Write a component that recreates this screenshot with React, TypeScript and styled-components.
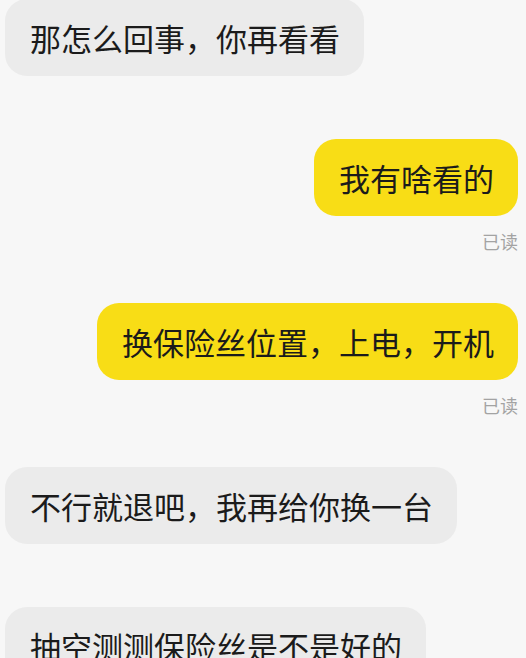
import React from 'react';
import styled, { createGlobalStyle } from 'styled-components';

const GlobalStyle = createGlobalStyle`
  html, body {
    margin: 0;
    padding: 0;
    background: #f7f7f7;
  }
  body {
    font-family: "Noto Sans CJK SC", "Noto Sans", sans-serif;
  }
`;

type Msg = { text: string; mine?: boolean; read?: boolean };

const messages: Msg[] = [
  { text: '那怎么回事，你再看看' },
  { text: '我有啥看的', mine: true, read: true },
  { text: '换保险丝位置，上电，开机', mine: true, read: true },
  { text: '不行就退吧，我再给你换一台' },
  { text: '抽空测测保险丝是不是好的' },
];

const ChatPage = () => (
  <React.Fragment>
    <GlobalStyle />
    <Thread>
      {messages.map((m, i) => (
        <Row key={i} $mine={!!m.mine}>
          <Bubble $mine={!!m.mine}>{m.text}</Bubble>
          {m.read && <ReadMark>已读</ReadMark>}
        </Row>
      ))}
    </Thread>
  </React.Fragment>
);

const Thread = styled.main`
  width: 526px;
  height: 658px;
  overflow: hidden;
  box-sizing: border-box;
  padding: 0 8px 0 5px;
  display: flex;
  flex-direction: column;
  gap: 63px;
`;

const Row = styled.div<{ $mine: boolean }>`
  display: flex;
  flex-direction: column;
  align-items: ${(p) => (p.$mine ? 'flex-end' : 'flex-start')};
  &:first-child {
    margin-top: -1px;
  }
`;

const Bubble = styled.div<{ $mine: boolean }>`
  box-sizing: border-box;
  height: 77px;
  padding: 0 24px 0 25px;
  display: flex;
  align-items: center;
  border-radius: 22px;
  background: ${(p) => (p.$mine ? '#f8dd16' : '#ebebeb')};
  color: #1b1b1b;
  font-size: 31px;
  line-height: 41px;
  white-space: nowrap;
`;

const ReadMark = styled.div`
  margin-top: 13px;
  margin-bottom: -13px;
  font-size: 18px;
  line-height: 24px;
  color: #a3a3a3;
`;

export default ChatPage;
